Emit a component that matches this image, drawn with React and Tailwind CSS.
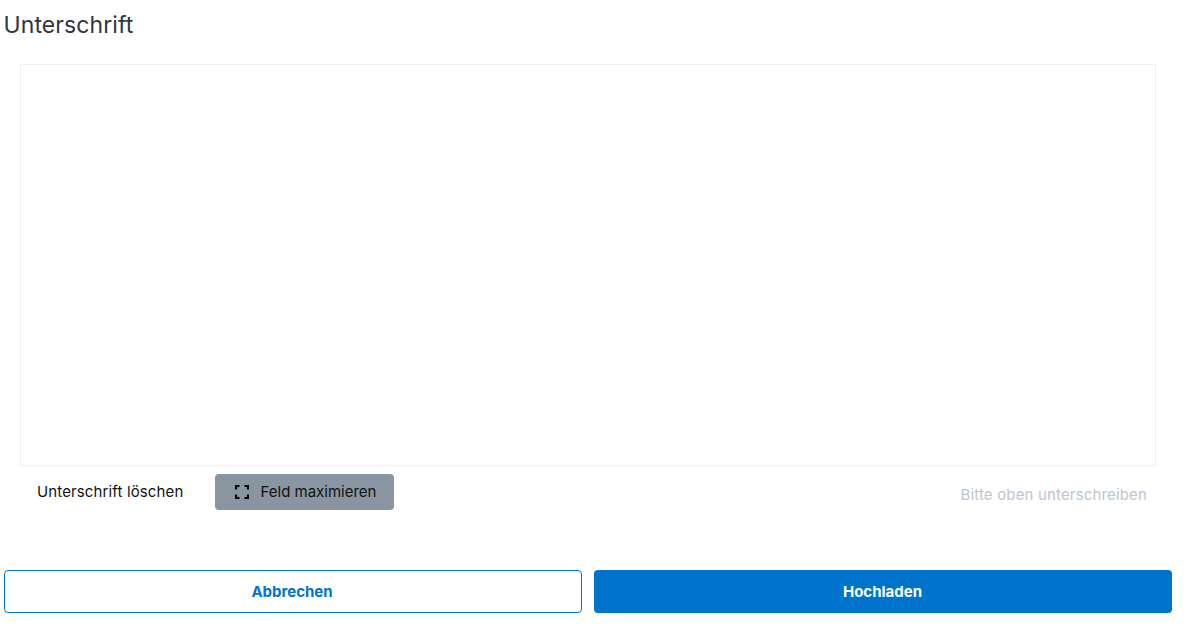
export default function App() {
  return (
    <div className="w-[1191px] h-[631px] bg-white pl-1 pr-[19px] pt-[10px] font-['Inter',sans-serif] overflow-hidden">
      <h2 className="-ml-[0.500px] text-[23px] leading-[30px] tracking-[0.1px] font-normal text-[#2e3640]">Unterschrift</h2>
      <div className="mt-[24px] mx-4 h-[402px] border border-[#eef0f3] bg-white" />
      <div className="mx-4 mt-2 h-9 flex items-center">
        <button className="w-[146px] ml-[17px] text-left text-[15px] tracking-[0.13px] text-[#111] leading-5 whitespace-nowrap">Unterschrift löschen</button>
        <button className="ml-[32px] w-[179px] h-9 pl-[2px] rounded bg-[#8996a1] flex items-center justify-center gap-[12px] text-[15px] text-[#111]">
          <svg width="14" height="14" viewBox="0 0 14 14" fill="none" stroke="#000" strokeWidth="2.200">
            <path d="M1 4.500V1H4.500M9.500 1H13V4.500M13 9.500V13H9.500M4.500 13H1V9.500" />
          </svg>
          Feld maximieren
        </button>
        <span className="ml-auto mr-[9px] mt-[6px] text-[15px] tracking-[0.16px] text-[#bcc5d0]">Bitte oben unterschreiben</span>
      </div>
      <div className="mt-[60px] flex gap-3">
        <button className="w-[578px] h-[43px] pt-px pr-[2px] rounded border border-[#0074cc] bg-white text-[#0074cc] text-[15px] font-bold">Abbrechen</button>
        <button className="w-[578px] h-[43px] pt-px pr-[1px] rounded bg-[#0074cc] text-white text-[15px] font-bold">Hochladen</button>
      </div>
    </div>
  );
}
